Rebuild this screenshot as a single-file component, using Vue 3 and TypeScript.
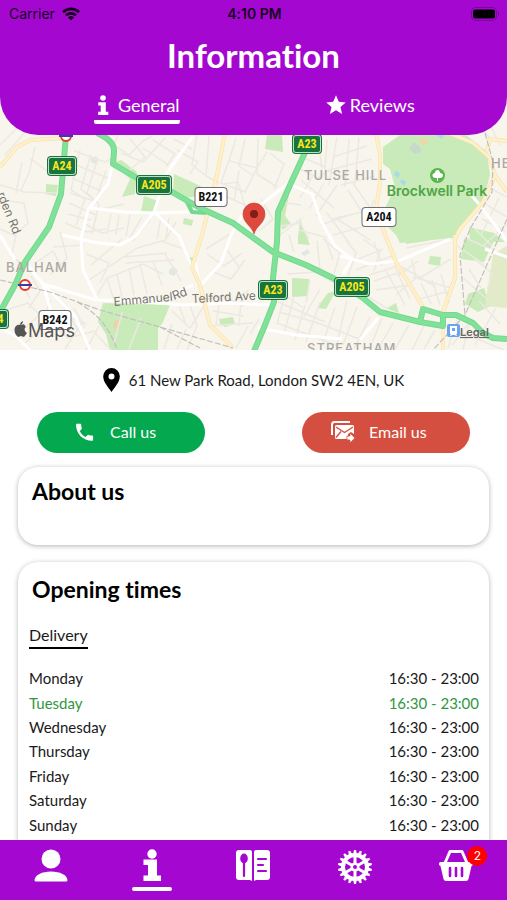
<script setup lang="ts">
import { ref } from 'vue'

type Tab = 'general' | 'reviews'
interface OpeningTime {
  day: string
  hours: string
  today?: boolean
}
interface RoadSign {
  label: string
  x: number
  y: number
  w: number
  primary: boolean
}

const activeTab = ref<Tab>('general')
const basketCount = ref(2)

const times: OpeningTime[] = [
  { day: 'Monday', hours: '16:30 - 23:00' },
  { day: 'Tuesday', hours: '16:30 - 23:00', today: true },
  { day: 'Wednesday', hours: '16:30 - 23:00' },
  { day: 'Thursday', hours: '16:30 - 23:00' },
  { day: 'Friday', hours: '16:30 - 23:00' },
  { day: 'Saturday', hours: '16:30 - 23:00' },
  { day: 'Sunday', hours: '16:30 - 23:00' },
]

const signs: RoadSign[] = [
  { label: 'A24', x: 62, y: 166, w: 30, primary: true },
  { label: 'A205', x: 154, y: 185, w: 36, primary: true },
  { label: 'A23', x: 307, y: 144, w: 30, primary: true },
  { label: 'B221', x: 211, y: 197, w: 33, primary: false },
  { label: 'A204', x: 379, y: 217, w: 35, primary: false },
  { label: 'A23', x: 273, y: 290, w: 30, primary: true },
  { label: 'A205', x: 352, y: 287, w: 36, primary: true },
  { label: 'A24', x: -6, y: 319, w: 30, primary: true },
  { label: 'B242', x: 55, y: 320, w: 33, primary: false },
]
</script>

<template>
  <div class="app">
    <header class="header">
      <div class="status">
        <span class="carrier">
          Carrier
          <svg width="18" height="14" viewBox="0 0 18 14" aria-hidden="true">
            <g fill="none" stroke="currentColor" stroke-width="2.6">
              <path d="M1 5.2a11.4 11.4 0 0 1 16 0" />
              <path d="M4 8.4a7.2 7.2 0 0 1 10 0" />
            </g>
            <path d="M9 13.6l-3-3.2a4.3 4.3 0 0 1 6 0z" fill="currentColor" />
          </svg>
        </span>
        <span class="clock">4:10 PM</span>
        <svg class="battery" width="30" height="14" viewBox="0 0 30 14" aria-hidden="true">
          <rect x="1.5" y=".5" width="25" height="13" rx="4" fill="none" stroke="#000" stroke-opacity=".25" />
          <rect x="3" y="2.5" width="22" height="9" rx="2" fill="#000" />
          <path d="M28 5q2 2 0 4z" fill="#000" fill-opacity=".4" />
        </svg>
      </div>
      <h1>Information</h1>
      <div class="tabs">
        <button type="button" class="tab" :class="{ active: activeTab === 'general' }" @click="activeTab = 'general'">
          <svg class="tab-info" width="18" height="20" viewBox="0 0 18 20" fill="#fff" aria-hidden="true">
            <circle cx="9" cy="3" r="2.8" />
            <path d="M4.3 7.3h7.5v9.4h2.5V20H4.1v-3.3h2.6v-6.1H4.3z" />
          </svg>
          General
        </button>
        <button type="button" class="tab" :class="{ active: activeTab === 'reviews' }" @click="activeTab = 'reviews'">
          <svg width="20" height="20" viewBox="0 0 20 20" fill="#fff" aria-hidden="true">
            <path d="M10 .3l2.800 6.500 6.900.6-5.200 4.600 1.600 7L10 15.300 3.900 19l1.600-7L.3 7.400l6.900-.6z" />
          </svg>
          Reviews
        </button>
      </div>
    </header>

    <main class="content">
      <svg class="map" viewBox="0 100 507 250" preserveAspectRatio="xMidYMid slice" role="img" aria-label="Map of 61 New Park Road">
        <rect y="100" width="507" height="250" fill="#f8f5ed" />
        <!-- parks -->
        <g fill="#c9eab9">
          <path d="M383 147l17-12h66l21 17 3 23-7 27-20 24-10 12-53 5-4-8-13-13-2-5 14-30-5-18-7-5z" />
          <path d="M103 303l67 2-7 17-5 7v21h-48l-4-16-8-12z" />
          <path d="M113 163l8-3 16 12-2 22-13 3 8-18z" />
          <path d="M144 196l14 5-4 14-13-3zM174 174l22 10 8 4-5 8-14 2-12-8zM184 218l9 2-1 6-9-2zM46 184l12 1-2 11-10-2z" />
          <path d="M267 135h15l1 17-18-3zM283 194l6 1-4 21 6 8-9 6-2-16z" />
          <path d="M300 219l8 22-10-2zM298 235h8l4 10-12-1zM292 278l17 1-1 17-16 1zM328 293l8-2-10 18-9-1z" />
          <path d="M404 235h39l-16 6-21 3zM430 256l11 1-1 9-12-2zM464 239l30 2-10 21-23-3zM468 294l16-6 6 18-12 6-13-8zM387 308l9-5 3 10-9-3z" />
          <path d="M219 319l14-2 2 7-10 3-5-3zM190 257l5 1-2 6-5-1zM469 227l25 6 11 9h-35z" />
        </g>
        <path d="M493 254l14-8v62l-22-2z" fill="#e1ebc7" />
        <path d="M409 149l5-7 6 5 1 5-6 2z" fill="#c9d8cc" />
        <path d="M418 138l8 1 3 4-7 2z" fill="#ecd8a7" />
        <path d="M436 135h8l-2 4zM396 171l4 3-2 4-4-3zM402 179l4 3-2 4-4-4z" fill="#a4dcec" />
        <path d="M114 321l6-2v9l-7 1z" fill="#e8d4a9" />
        <path d="M169 270l5-3 4 4-4 5-5-2zM91 158l5-2 3 4-4 4-4-2zM301 253l7-4 2 4-6 3z" fill="#e0e8e2" />
        <!-- residential streets -->
        <g fill="none" stroke="#ece8e2" stroke-width="1.500">
          <path d="M0 185l25 7 31 1M0 200l24 3 4 20-13 12M22 162l-6 31M30 158l24 18M35 147l-6 26-8 17M0 229l16 7-5 21 18 10" />
          <path d="M74 151l31 11 8-4M76 165l34 14M72 178l31 14M70 193l27 9M69 203l27 12M68 214l23 6M80 150l-9 40 14 9-9 26M91 154l-10 35 13 11" />
          <path d="M97 161l-10 32 12 11-7 30M106 171l-10 28M124 204l-22 5M65 223l22 9 19-3M53 247l31-2M60 232l7 26-17 17M118 135l-4 10 15 10 14-14 9-5M121 153l22 9 22-24" />
          <path d="M130 139l15 18-16 14M143 148l24 16M153 140l22 14-9 13M177 150l21 12-8 12M174 139l18 10M197 135l-5 30 13 10M209 136l-3 40 13 7" />
          <path d="M85 224l17 9 22-5M111 214l-4 20M119 215l-3 20M130 214l-4 22M142 217l-13 22M151 219l-18 22M161 217l-4 22M169 218l-3 20M176 222l-12 20 23 8" />
          <path d="M86 254l23 9-9 20M91 265l31-26M86 282l51-34 29-8M95 299l12-21 36-14 20 10M107 278l7 22M117 273l5 25M129 268l5 27M140 264l7 30M153 261l9 24M124 257l43-4M125 263l49-3M165 254l16 27" />
          <path d="M206 249l24-15M207 254l17 12 18-13M211 271l20 8 14-19M225 247l14 20M204 300l20-4 19 10M213 311l31 5M208 326l45-3M220 298l-4 27M241 300l-2 26M229 305l20-15" />
          <path d="M236 138l-7 23 28 7 10-16M229 160l-8 23 24 9 12-24M245 139l-6 27 15 10M258 138l-1 36 20 13M222 184l16-2 9 31M239 171l-5 30M221 194l28 13M270 153l14 11-10 25" />
          <path d="M300 169l18 9 12-9M304 158l21 9M319 145l3 24M327 140l-2 30 19 7M337 137l-8 48M349 139l-4 48M359 137l-4 47M301 180l33 28M313 175l-13 23M324 183l-15 26M337 185l-21 31" />
          <path d="M333 157l34-11M330 170l42-11M341 185l34-9M348 190l14 22-30 7M353 183l18 26M337 219l33 21M327 213l22 30M321 225l32-11M333 235l33-9 8-26M281 226l19-3 9 16" />
          <path d="M280 202l21 3M280 235l22-17M299 230l26 7 8 23M323 239l17 14-6 21M289 235l5 17M261 199l12 20-14 12M317 241l3 29" />
          <path d="M347 241l9 12-8 24M363 239l17 12-6 20M374 242l8 24M351 262l32-13M356 270l36-14M369 275l26-8M374 281l30-10M376 290l35-5M385 269l20 36M394 265l16 34M398 276l20-15" />
          <path d="M402 267l34 20M412 260l4 18-20 17M418 279l33-20M421 283l10 21M432 280l8 25M441 274l8 29M406 248l44-9M413 277l38 11M416 300l34-9M367 296l21 13" />
          <path d="M278 302l47 20M279 312l39 11 44 17M277 323l62 23M277 290l25 17M286 291l-9 33M294 296l-10 38M305 305l-10 35M320 302l-14 40M335 307l-13 39M347 300l-10 44" />
          <path d="M288 274l28-2 20 12M310 280l-4 22M320 289l-16 28M357 307l-14 38M370 317l-16 32M382 318l-12 30M393 323l-15 26M409 325l-14 24M424 326l-12 24M435 330l-11 19" />
          <path d="M469 269l12 19M474 259l19 15-6 15M463 278l25 22M479 301l21 23M457 320l-9 28M470 320l-7 30M496 308l-21 37M460 332l44 18M452 345l17-22" />
          <path d="M490 188l17 9M487 205l20 12M482 219l23 12M475 229l17 17M499 198l-18 37M507 224l-24 22M456 245l29 20M464 237l28 13" />
          <path d="M37 262l16-11 8 15M31 276l9 15-11 17M19 281l11 17M3 311l25-8 15 15M20 332l25-22M24 344l20-17M50 323l18 15 27-7M56 313l31 11M64 309l19 28M74 308l11 20M51 300l-10 23M83 321l-18 28M99 326l-13 24M95 333l16 17M122 312l-8 32M141 318l-12 31" />
          <path d="M172 311l18 17 14-22M179 305l7 20M190 305l7 21M172 324l-8 25M186 329l-9 20M197 326l-10 24M248 326l-12 22M259 319l-9 15M490 138l-8-9M500 146l-10-22M0 145l18-18M5 155l22-25" />
        </g>
        <!-- connecting streets -->
        <g fill="none" stroke="#fff" stroke-width="3" stroke-linejoin="round">
          <path d="M112 166l-4 18-20 26-7 29 2 31 14 29M91 208l33 4 30 1 31-1h20M154 212l-18 24-16 9-22-2-36-8" />
          <path d="M154 212l25 24 13 31M154 212l13-39 26-37M28 266l15 18 53 16 38 1 49 4 45-2 42 2M0 235l15 25M195 262l5 24 21-23 10-28 11-20" />
          <path d="M193 285l-22 10M43 284l10 34M292 185l20 9 9 27 14 25 17 13-9 15M340 256l30 8 28-3 52-22M258 207l31-24M507 241l-28-37-7-8M378 318l-18 22M258 328l39 7 45 4M507 257l-22-8" />
          <path d="M0 328l16 8 14 14M90 350l-15-34-31-31" />
        </g>
        <!-- secondary roads -->
        <g fill="none" stroke-linejoin="round">
          <g stroke="#f6dea8" stroke-width="4">
            <path d="M0 167l17-20 13-7 36-2M225 133l-8 42-15 60-10 32 8 18 10 40 23 23" />
            <path d="M376 133l4 22v28l-4 27 10 27 10 25 27 45M455 235v43l-12 34v38M449 133l24 10 17 15 5 17-12 27-23 27-5 10M487 151l3-12 17 2M495 175l12 17" />
          </g>
          <g stroke="#fff0c9" stroke-width="3">
            <path d="M0 167l17-20 13-7 36-2M225 133l-8 42-15 60-10 32 8 18 10 40 23 23" />
            <path d="M376 133l4 22v28l-4 27 10 27 10 25 27 45M455 235v43l-12 34v38M449 133l24 10 17 15 5 17-12 27-23 27-5 10M487 151l3-12 17 2M495 175l12 17" />
          </g>
        </g>
        <!-- railway -->
        <g fill="none" stroke="#c2c0bd" stroke-width="1.2" stroke-dasharray="6 2">
          <path d="M0 280l50 12 50 18 60 17 73 21M77 302q30 16 40 48M160 327l40 21M485 133l8 29-1 30-22 37-10 26 5 60M507 219l-42 96-32 35" />
        </g>
        <!-- trunk roads -->
        <g fill="none" stroke="#74d98e" stroke-width="6" stroke-linejoin="round">
          <path d="M66 135l-5 59-12 33-24 35-10 23-15 27M97 133q18 8 17 19l-1 12 24 14 35 14 28 16 33 15 40 29 33 13 27 13 30 20 17 14 40 10 23 4v-11l-20-6-3 13M443 315h13l17 8 10 10 10 5 14 1" />
          <path d="M308 146l-18 39-12 27-1 30-4 36 1 24-9 23-13 31" />
          <path d="M186 200l6 12 14 1" stroke-width="4" />
        </g>
        <g fill="none" stroke="#80e199" stroke-width="4" stroke-linejoin="round">
          <path d="M66 135l-5 59-12 33-24 35-10 23-15 27M97 133q18 8 17 19l-1 12 24 14 35 14 28 16 33 15 40 29 33 13 27 13 30 20 17 14 40 10 23 4v-11l-20-6-3 13M443 315h13l17 8 10 10 10 5 14 1" />
          <path d="M308 146l-18 39-12 27-1 30-4 36 1 24-9 23-13 31" />
        </g>
        <!-- stations -->
        <g v-for="s in [[25, 285], [66, 136]]" :key="s[0]">
          <circle :cx="s[0]" :cy="s[1]" r="5" fill="#fff" stroke="#e9382b" stroke-width="2" />
          <path :d="`M${s[0] - 7} ${s[1]}h14`" stroke="#3442a5" stroke-width="2" />
        </g>
        <rect x="447" y="324" width="13" height="13" rx="2" fill="#6aa3ef" />
        <path d="M450 326h7v8h-1l1 2h-1l-1-1h-3l-1 1h-1l1-2h-1zM452 328v3h3v-3z" fill="#fff" fill-rule="evenodd" />
        <!-- place names -->
        <g class="place">
          <text x="304" y="180">TULSE HILL</text>
          <text x="6" y="272">BALHAM</text>
          <text x="307" y="353">STREATHAM</text>
          <text x="491" y="168">HERNE</text>
        </g>
        <g class="street">
          <text transform="translate(114 306) rotate(-5)">Emmanuel</text>
          <text transform="translate(174 300) rotate(-20)">Rd</text>
          <text transform="translate(192 303) rotate(-3)">Telford Ave</text>
          <text transform="translate(-3 194) rotate(68)">rden Rd</text>
        </g>
        <circle cx="437.500" cy="175.500" r="7.500" fill="#5cb44d" />
        <path d="M437 181v-3h-1c-5 0-4-5-1-5 0-4 5-4 5 0 4 0 4 5 0 5h-2v3z" fill="#fff" />
        <text class="park" x="437" y="196" text-anchor="middle">Brockwell Park</text>
        <!-- road numbers -->
        <g v-for="s in signs" :key="`${s.label}-${s.x}`">
          <rect :x="s.x - s.w / 2" :y="s.y - 10" :width="s.w" height="20" rx="4" :fill="s.primary ? '#17743f' : '#6f6f6f'" />
          <rect :x="s.x - s.w / 2 + 1" :y="s.y - 9" :width="s.w - 2" height="18" rx="3" :fill="s.primary ? '#c0dfc5' : '#fff'" />
          <rect v-if="s.primary" :x="s.x - s.w / 2 + 2" :y="s.y - 8" :width="s.w - 4" height="16" rx="2" fill="#17743f" />
          <text class="sign" :class="{ primary: s.primary }" :x="s.x" :y="s.y + 4" text-anchor="middle">{{ s.label }}</text>
        </g>
        <!-- attribution -->
        <path d="M25 326q0-3-4-1-3-1-5 1c-3 3-1 9 2 11 1 0 2-1 3-1s2 1 3 1c1-1 2-3 3-4-3-2-3-5-1-6zM20 325q0-3 3-4 0 3-3 4z" fill="#555" />
        <text class="maps" x="28" y="337">Maps</text>
        <text class="legal" x="460" y="336">Legal</text>
        <!-- restaurant marker -->
        <path d="M254 234c-2-8-11-11-11-20a11 11 0 0 1 22 0c0 9-9 12-11 20z" fill="#df483d" stroke="#bb4037" stroke-width=".6" />
        <circle cx="254" cy="214" r="4" fill="#811d16" />
      </svg>

      <address class="address">
        <svg width="17" height="24" viewBox="0 0 17 24" aria-hidden="true">
          <path d="M8.500 0A8.300 8.300 0 0 0 .2 8.300C.2 14 5 19 8.500 24c3.500-5 8.300-10 8.300-15.700A8.300 8.300 0 0 0 8.500 0zm0 5.400a3 3 0 1 1 0 6 3 3 0 0 1 0-6z" />
        </svg>
        61 New Park Road, London SW2 4EN, UK
      </address>

      <div class="actions">
        <button type="button" class="action call">
          <svg width="24" height="24" viewBox="0 0 24 24" fill="#fff" aria-hidden="true">
            <path d="M7.800 11.200c1.300 2.500 3.400 4.600 5.900 5.900l2-2c.3-.3.7-.3 1-.2 1 .4 2.200.6 3.400.6.600 0 1 .4 1 1v3.200c0 .6-.4 1-1 1C11 20.700 4 13.700 4 4.700c0-.6.4-1 1-1h3.200c.6 0 1 .4 1 1 0 1.200.2 2.400.6 3.400.1.400 0 .8-.2 1z" />
          </svg>
          Call us
        </button>
        <button type="button" class="action email">
          <svg width="24" height="22" viewBox="0 0 24 22" fill="#fff" aria-hidden="true">
            <path d="M1 14V3.500Q1 1 3.500 1H19" fill="none" stroke="#fff" stroke-width="2" />
            <path d="M5.500 4h16q1.500 0 1.500 1.500V13l-3-2-3 2v5H5.500Q4 18 4 16.500v-11Q4 4 5.500 4z" />
            <path d="M5 6l8.500 5.500L22 6M5 16.500l5-6" fill="none" stroke="#d54f40" stroke-width="1.400" />
            <path d="M16 15h3v-3l5 5-5 5v-3h-3z" stroke="#d54f40" stroke-width=".8" />
          </svg>
          Email us
        </button>
      </div>

      <section class="card about">
        <h2>About us</h2>
      </section>

      <section class="card opening">
        <h2>Opening times</h2>
        <h3>Delivery</h3>
        <table class="times">
          <tbody>
            <tr v-for="t in times" :key="t.day" :class="{ today: t.today }">
              <th scope="row">{{ t.day }}</th>
              <td>{{ t.hours }}</td>
            </tr>
          </tbody>
        </table>
      </section>
    </main>

    <nav class="nav" aria-label="Main">
      <a href="#account" aria-label="Account">
        <svg width="36" height="34" viewBox="0 0 36 34" fill="#fff" aria-hidden="true">
          <circle cx="18" cy="10" r="9.500" />
          <path d="M1.500 31C2 26 9 22.500 18 22.500S34 26 34.500 31q0 1.500-1.500 1.500H3Q1.500 32.500 1.500 31z" />
        </svg>
      </a>
      <a href="#information" class="current" aria-label="Information" aria-current="page">
        <svg width="36" height="34" viewBox="0 0 36 34" fill="#fff" aria-hidden="true">
          <circle cx="18" cy="5" r="4.700" />
          <path d="M9.500 10.500H23v16h4V32H9.500v-5.500H14V16H9.500z" />
        </svg>
      </a>
      <a href="#menu" aria-label="Menu">
        <svg width="36" height="34" viewBox="0 0 36 34" aria-hidden="true">
          <path d="M4 1h11q2 0 2 2v29l-2-1H4q-3 0-3-3V4q0-3 3-3zM21 1h11q3 0 3 3v24q0 3-3 3H21l-2 1V3q0-2 2-2z" fill="#fff" />
          <ellipse cx="9" cy="9.500" rx="3.800" ry="5" fill="#a408d0" />
          <path d="M9 12v15M23 10h8M23 16h5M23 22h8" fill="none" stroke="#a408d0" stroke-width="2.200" stroke-linecap="round" />
        </svg>
      </a>
      <a href="#settings" aria-label="Settings">
        <svg width="36" height="36" viewBox="-18 -18 36 36" aria-hidden="true">
          <g fill="#fff">
            <path v-for="i in 18" :key="i" d="M-2-12l1-5h2l1 5z" :transform="`rotate(${(i - 1) * 20})`" />
          </g>
          <circle r="12" fill="none" stroke="#fff" stroke-width="4" />
          <path v-for="i in 6" :key="`spoke${i}`" d="M0-2v-10" stroke="#fff" stroke-width="3" :transform="`rotate(${i * 60})`" />
          <circle r="4.500" fill="#fff" />
          <circle r="2" fill="#a408d0" />
        </svg>
      </a>
      <a href="#basket" aria-label="Basket">
        <span class="basket">
          <svg width="36" height="34" viewBox="0 0 36 34" aria-hidden="true">
            <path d="M7 14l5-11.500h12L29 14" fill="none" stroke="#fff" stroke-width="3" stroke-linejoin="round" />
            <path d="M2.500 13h31q1.500 0 1.500 1.500v1.500l-1.500 1-3 13q-.5 2-2.500 2H8q-2 0-2.500-2l-3-13L1 16v-1.500Q1 13 2.500 13z" fill="#fff" />
            <path d="M12 19v8M18 19v8M24 19v8" stroke="#a408d0" stroke-width="2.600" stroke-linecap="round" />
          </svg>
          <span class="badge">{{ basketCount }}</span>
        </span>
      </a>
    </nav>
  </div>
</template>

<style>
body {
  margin: 0;
  background: #fff;
}
</style>

<style scoped>
.app {
  display: flex;
  flex-direction: column;
  height: 100vh;
  overflow: hidden;
  background: #fff;
  color: #1a1a1a;
  font-family: Lato, "Liberation Sans", sans-serif;
  font-variant-ligatures: none;
}
h1, h2, h3 {
  margin: 0;
}
button {
  font-family: inherit;
  cursor: pointer;
}
.header {
  position: relative;
  z-index: 1;
  flex: none;
  box-sizing: border-box;
  height: 135px;
  border-radius: 0 0 38px 38px;
  background: #a408d0;
  color: #fff;
}
.status {
  display: grid;
  grid-template-columns: 1fr auto 1fr;
  align-items: center;
  height: 27px;
  padding: 0 7px 0 9px;
  color: #16001d;
  font-family: Inter, sans-serif;
  font-size: 14px;
}
.carrier {
  display: flex;
  align-items: center;
  gap: 7px;
}
.clock {
  font-weight: 600;
}
.battery {
  justify-self: end;
}
h1 {
  line-height: 56px;
  font-size: 33px;
  font-weight: 700;
  text-align: center;
}
.tabs {
  display: grid;
  grid-template-columns: 1fr 1fr;
  justify-items: center;
  padding: 9px 20px 0;
}
.tab {
  display: flex;
  align-items: center;
  gap: 4px;
  box-sizing: border-box;
  height: 32px;
  padding: 0 0 6px;
  border: 0;
  background: none;
  color: #fff;
  font-size: 18px;
}
.tab.active {
  border-radius: 2px;
  background: linear-gradient(#fff, #fff) bottom / 100% 4px no-repeat;
}
.tab-info {
  margin-right: 2px;
}
.content {
  flex: 1;
  min-height: 0;
  margin-top: -35px;
  overflow-y: auto;
  scrollbar-width: none;
}
.map {
  display: block;
  width: 100%;
  height: 250px;
  font-family: Inter, sans-serif;
}
.place {
  fill: #aaa8a3;
  font-size: 13px;
  font-weight: 500;
  letter-spacing: 1px;
}
.street {
  fill: #77756f;
  font-size: 12px;
}
.park {
  fill: #4fa544;
  font-size: 14px;
  font-weight: 600;
}
.sign {
  fill: #111;
  font-family: "Roboto Condensed", "DejaVu Sans Condensed", Roboto, sans-serif;
  font-size: 12px;
  font-weight: 700;
}
.sign.primary {
  fill: #f9e71c;
}
.maps {
  fill: #555;
  font-size: 18px;
}
.legal {
  fill: #666;
  font-size: 11px;
  font-weight: 600;
  text-decoration: underline;
}
.address {
  display: flex;
  align-items: center;
  justify-content: center;
  gap: 9px;
  height: 60px;
  font-size: 15px;
  font-style: normal;
}
.actions {
  display: flex;
  justify-content: space-between;
  margin-top: 2px;
  padding: 0 37px;
}
.action {
  display: flex;
  align-items: center;
  box-sizing: border-box;
  width: 168px;
  height: 41px;
  padding: 0 0 2px;
  border: 0;
  border-radius: 21px;
  color: #fff;
  font-size: 16px;
}
.call {
  gap: 14px;
  padding-left: 35px;
  background: #04a84f;
}
.email {
  gap: 14px;
  padding-left: 29px;
  background: #d54f40;
}
.card {
  box-sizing: border-box;
  margin: 0 18px;
  border-radius: 20px;
  background: #fff;
  box-shadow: 0 1px 5px rgba(0, 0, 0, 0.3);
}
.card h2 {
  padding-left: 4px;
  color: #000;
  line-height: 30px;
  font-size: 23px;
  font-weight: 700;
}
.about {
  min-height: 78px;
  margin-top: 14px;
  padding: 9px 10px;
}
.opening {
  margin-top: 17px;
  margin-bottom: 20px;
  padding: 12px 10px 40px;
}
.opening h3 {
  width: fit-content;
  margin: 19px 0 17px 1px;
  border-bottom: 2px solid #000;
  line-height: 24px;
  font-size: 16px;
  font-weight: 400;
}
.times {
  width: 100%;
  height: 171px;
  border-collapse: collapse;
  font-size: 15px;
}
.times th {
  padding: 0 0 0 1px;
  font-weight: 400;
  text-align: left;
}
.times td {
  padding: 0;
  text-align: right;
}
.today {
  color: #2f9840;
}
.nav {
  display: grid;
  grid-template-columns: repeat(5, 1fr);
  position: relative;
  z-index: 1;
  flex: none;
  height: 60px;
  background: #a408d0;
}
.nav a {
  display: flex;
  flex-direction: column;
  align-items: center;
  padding-top: 9px;
}
.current::after {
  content: "";
  width: 40px;
  height: 4px;
  margin-top: 4px;
  border-radius: 2px;
  background: #fff;
}
.basket {
  position: relative;
  height: 34px;
}
.badge {
  position: absolute;
  top: -3px;
  right: -13px;
  min-width: 20px;
  border-radius: 10px;
  background: #f00;
  color: #fff;
  font-family: Inter, sans-serif;
  font-size: 12px;
  line-height: 20px;
  text-align: center;
}
</style>
